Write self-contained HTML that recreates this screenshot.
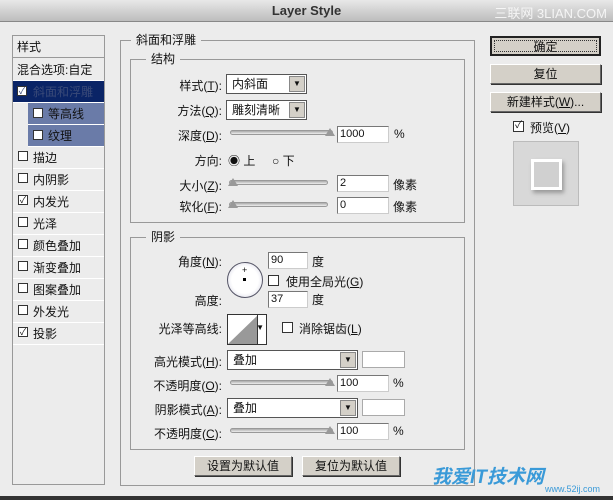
<!DOCTYPE html>
<html><head><meta charset="utf-8"><style>
*{box-sizing:border-box;margin:0;padding:0}
body{width:613px;height:500px;background:#ececec;font-family:"Liberation Sans","Noto Sans CJK SC",sans-serif;font-size:12px;color:#111;position:relative;overflow:hidden}
.a{position:absolute;white-space:nowrap}
.title{left:0;top:0;width:613px;height:22px;background:linear-gradient(#e8e8e8,#bdbdbd);border-bottom:1px solid #888;text-align:center;font-weight:bold;font-size:13px;line-height:22px;color:#333}
.left{left:12px;top:35px;width:93px;height:450px;border:1px solid #999;background:#ececec}
.it{position:absolute;left:0;width:91px;height:22px;line-height:22px;border-bottom:1px solid #fff;padding-left:20px}
.cb{position:absolute;width:10px;height:10px;border:1px solid #333;background:#fff;font-size:9px;line-height:8px;text-align:center}
.fs{border:1px solid #999;position:absolute}
.lg{position:absolute;background:#ececec;padding:0 5px;top:-9px;line-height:16px}
.inp{position:absolute;height:17px;background:#fff;border:1px solid #777;border-right-color:#ccc;border-bottom-color:#ccc;line-height:15px;padding-left:2px;font-size:11px}
.sel{position:absolute;height:20px;background:#fff;border:1px solid #555;line-height:18px;padding-left:5px}
.sel b{position:absolute;right:1px;top:1px;width:16px;height:16px;background:#d4d0c8;border:1px solid #888;font-size:8px;line-height:14px;text-align:center;font-weight:normal}
.sl{position:absolute;height:5px;background:linear-gradient(#aaa,#eee);border:1px solid #999;border-radius:3px}
.th{position:absolute;width:0;height:0;border-left:5px solid transparent;border-right:5px solid transparent;border-bottom:8px solid #999}
.btn{position:absolute;height:20px;background:#d4d0c8;border:1px solid #666;border-top-color:#fff;border-left-color:#fff;text-align:center;line-height:18px;box-shadow:1px 1px 0 #333}
.r{text-align:right}
</style></head><body>
<div class="a title">Layer Style</div>
<div class="a" style="right:6px;top:3px;color:#fff;font-size:13px;opacity:.8">三联网 3LIAN.COM</div>

<div class="a left">
<div class="it" style="top:0;padding-left:4px;border-bottom:1px solid #999">样式</div>
<div class="it" style="top:23px;padding-left:4px">混合选项:自定</div>
<div class="it" style="top:45px;background:#0a2466;color:#3a4a78"><span class="cb" style="left:4px;top:5px">✓</span>斜面和浮雕</div>
<div class="it" style="top:67px;left:15px;width:76px;background:#6a7ba8;color:#111;padding-left:20px"><span class="cb" style="left:5px;top:5px"></span>等高线</div>
<div class="it" style="top:89px;left:15px;width:76px;background:#6a7ba8;color:#111;padding-left:20px"><span class="cb" style="left:5px;top:5px"></span>纹理</div>
<div class="it" style="top:111px"><span class="cb" style="left:5px;top:4px"></span>描边</div>
<div class="it" style="top:133px"><span class="cb" style="left:5px;top:4px"></span>内阴影</div>
<div class="it" style="top:155px"><span class="cb" style="left:5px;top:4px">✓</span>内发光</div>
<div class="it" style="top:177px"><span class="cb" style="left:5px;top:4px"></span>光泽</div>
<div class="it" style="top:199px"><span class="cb" style="left:5px;top:4px"></span>颜色叠加</div>
<div class="it" style="top:221px"><span class="cb" style="left:5px;top:4px"></span>渐变叠加</div>
<div class="it" style="top:243px"><span class="cb" style="left:5px;top:4px"></span>图案叠加</div>
<div class="it" style="top:265px"><span class="cb" style="left:5px;top:4px"></span>外发光</div>
<div class="it" style="top:287px"><span class="cb" style="left:5px;top:4px">✓</span>投影</div>
</div>

<div class="fs" style="left:120px;top:40px;width:355px;height:446px"><span class="lg" style="left:10px">斜面和浮雕</span></div>
<div class="fs" style="left:130px;top:59px;width:335px;height:164px"><span class="lg" style="left:15px">结构</span></div>
<div class="a r" style="left:150px;top:77px;width:72px">样式(<u>T</u>):</div>
<div class="sel" style="left:226px;top:74px;width:81px">内斜面<b>▼</b></div>
<div class="a r" style="left:150px;top:102px;width:72px">方法(<u>Q</u>):</div>
<div class="sel" style="left:226px;top:100px;width:81px">雕刻清晰<b>▼</b></div>
<div class="a r" style="left:150px;top:127px;width:72px">深度(<u>D</u>):</div>
<div class="sl" style="left:230px;top:130px;width:103px"></div><div class="th" style="left:325px;top:128px"></div>
<div class="inp" style="left:337px;top:126px;width:52px">1000</div><div class="a" style="left:394px;top:127px">%</div>
<div class="a r" style="left:150px;top:152px;width:72px">方向:</div>
<div class="a" style="left:228px;top:152px">◉ 上&nbsp;&nbsp;&nbsp;&nbsp;&nbsp;○ 下</div>
<div class="a r" style="left:150px;top:177px;width:72px">大小(<u>Z</u>):</div>
<div class="sl" style="left:229px;top:180px;width:99px"></div><div class="th" style="left:228px;top:178px"></div>
<div class="inp" style="left:337px;top:175px;width:52px">2</div><div class="a" style="left:393px;top:176px">像素</div>
<div class="a r" style="left:150px;top:198px;width:72px">软化(<u>F</u>):</div>
<div class="sl" style="left:229px;top:202px;width:99px"></div><div class="th" style="left:228px;top:200px"></div>
<div class="inp" style="left:337px;top:197px;width:52px">0</div><div class="a" style="left:393px;top:198px">像素</div>

<div class="fs" style="left:130px;top:237px;width:335px;height:213px"><span class="lg" style="left:15px">阴影</span></div>
<div class="a r" style="left:150px;top:253px;width:72px">角度(<u>N</u>):</div>
<div class="a" style="left:227px;top:262px;width:36px;height:36px;border-radius:50%;border:1px solid #556;background:radial-gradient(#fff 55%,#ccd)"><span style="position:absolute;left:14px;top:2px;font-size:9px">+</span><span style="position:absolute;left:15px;top:15px;width:3px;height:3px;background:#000"></span></div>
<div class="inp" style="left:268px;top:252px;width:40px">90</div><div class="a" style="left:312px;top:253px">度</div>
<div class="cb" style="left:268px;top:275px;width:11px;height:11px"></div><div class="a" style="left:286px;top:273px">使用全局光(<u>G</u>)</div>
<div class="a r" style="left:150px;top:292px;width:72px">高度:</div>
<div class="inp" style="left:268px;top:291px;width:40px">37</div><div class="a" style="left:312px;top:291px">度</div>
<div class="a r" style="left:140px;top:320px;width:82px">光泽等高线:</div>
<div class="a" style="left:227px;top:314px;width:40px;height:31px;border:1px solid #333;background:#fff"><svg width="30" height="29" style="position:absolute;left:0;top:0"><polygon points="0,29 30,0 30,29" fill="#999"/></svg><span style="position:absolute;right:2px;top:8px;font-size:8px">▼</span><span style="position:absolute;left:29px;top:0;width:1px;height:29px;background:#333"></span></div>
<div class="cb" style="left:282px;top:322px;width:11px;height:11px"></div><div class="a" style="left:299px;top:320px">消除锯齿(<u>L</u>)</div>
<div class="a r" style="left:140px;top:353px;width:82px">高光模式(<u>H</u>):</div>
<div class="sel" style="left:227px;top:350px;width:131px">叠加<b>▼</b></div>
<div class="a" style="left:362px;top:351px;width:43px;height:17px;background:#fff;border:1px solid #aaa"></div>
<div class="a r" style="left:140px;top:377px;width:82px">不透明度(<u>O</u>):</div>
<div class="sl" style="left:230px;top:380px;width:103px"></div><div class="th" style="left:325px;top:378px"></div>
<div class="inp" style="left:337px;top:375px;width:52px">100</div><div class="a" style="left:393px;top:376px">%</div>
<div class="a r" style="left:140px;top:401px;width:82px">阴影模式(<u>A</u>):</div>
<div class="sel" style="left:227px;top:398px;width:131px">叠加<b>▼</b></div>
<div class="a" style="left:362px;top:399px;width:43px;height:17px;background:#fff;border:1px solid #aaa"></div>
<div class="a r" style="left:140px;top:425px;width:82px">不透明度(<u>C</u>):</div>
<div class="sl" style="left:230px;top:428px;width:103px"></div><div class="th" style="left:325px;top:426px"></div>
<div class="inp" style="left:337px;top:423px;width:52px">100</div><div class="a" style="left:393px;top:424px">%</div>

<div class="btn" style="left:194px;top:456px;width:98px">设置为默认值</div>
<div class="btn" style="left:302px;top:456px;width:98px">复位为默认值</div>

<div class="btn" style="left:490px;top:36px;width:111px;border:2px solid #222;box-shadow:none;outline:1px dotted #333;outline-offset:-5px">确定</div>
<div class="btn" style="left:490px;top:64px;width:111px">复位</div>
<div class="btn" style="left:490px;top:92px;width:111px">新建样式(<u>W</u>)...</div>
<div class="cb" style="left:513px;top:121px;width:11px;height:11px;font-size:10px">✓</div>
<div class="a" style="left:530px;top:119px">预览(<u>V</u>)</div>
<div class="a" style="left:513px;top:141px;width:66px;height:65px;background:#d8d8d8;border:1px solid #bbb"><div style="position:absolute;left:17px;top:17px;width:31px;height:31px;border:3px solid #fff;background:#d0d0d0;box-shadow:2px 3px 4px #999"></div></div>

<div class="a" style="left:0;top:496px;width:613px;height:4px;background:#333"></div>
<div class="a" style="left:432px;top:462px;color:#3a9ad8;font-weight:bold;font-size:19px;font-style:italic">我爱IT技术网</div>
<div class="a" style="left:545px;top:484px;color:#3a9ad8;font-size:9px">www.52ij.com</div>
</body></html>
